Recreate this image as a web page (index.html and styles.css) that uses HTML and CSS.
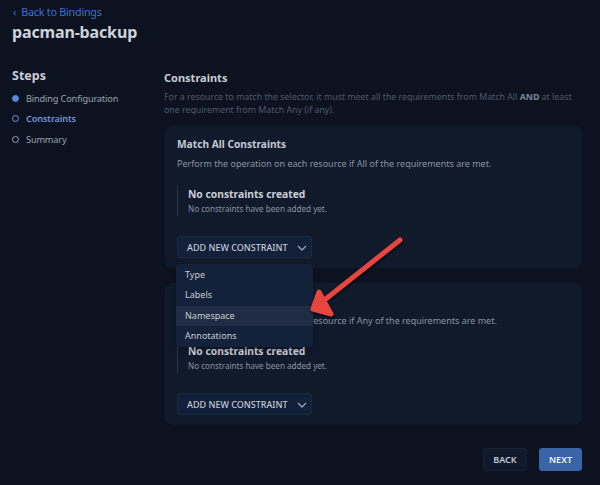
FILE: index.html
```html
<!DOCTYPE html>
<html>
<head>
<meta charset="utf-8">
<link rel="stylesheet" href="styles.css">
</head>
<body>
<div class="page">
  <a class="back">‹&nbsp; Back to Bindings</a>
  <h1 class="title">pacman-backup</h1>
  <div class="layout">
    <aside class="sidebar">
      <h2 class="steps-title">Steps</h2>
      <ul class="steps">
        <li class="step done"><span class="dot"></span>Binding Configuration</li>
        <li class="step active"><span class="dot"></span>Constraints</li>
        <li class="step"><span class="dot"></span>Summary</li>
      </ul>
    </aside>
    <main class="content">
      <h3 class="section-title">Constraints</h3>
      <p class="section-desc">For a resource to match the selector, it must meet all the requirements from Match All <b>AND</b> at least one requirement from Match Any (if any).</p>

      <section class="card">
        <h4 class="card-title">Match All Constraints</h4>
        <p class="card-desc">Perform the operation on each resource if All of the requirements are met.</p>
        <div class="empty">
          <div class="empty-title">No constraints created</div>
          <div class="empty-text">No constraints have been added yet.</div>
        </div>
        <div class="dd">
          <button class="add-btn"><span>ADD NEW CONSTRAINT</span>
            <svg class="chev" width="10" height="6" viewBox="0 0 10 6"><path d="M1 1l4 4 4-4" fill="none" stroke="#9aa3b1" stroke-width="1.3"/></svg>
          </button>
          <ul class="menu">
            <li>Type</li>
            <li>Labels</li>
            <li class="hl">Namespace</li>
            <li>Annotations</li>
          </ul>
        </div>
      </section>

      <section class="card">
        <h4 class="card-title">Match Any Constraints</h4>
        <p class="card-desc">Perform the operation on each resource if Any of the requirements are met.</p>
        <div class="empty">
          <div class="empty-title">No constraints created</div>
          <div class="empty-text">No constraints have been added yet.</div>
        </div>
        <div class="dd">
          <button class="add-btn"><span>ADD NEW CONSTRAINT</span>
            <svg class="chev" width="10" height="6" viewBox="0 0 10 6"><path d="M1 1l4 4 4-4" fill="none" stroke="#9aa3b1" stroke-width="1.3"/></svg>
          </button>
        </div>
      </section>

      <div class="footer">
        <button class="btn btn-back">BACK</button>
        <button class="btn btn-next">NEXT</button>
      </div>
    </main>
  </div>
  <svg class="arrow" width="600" height="485" viewBox="0 0 600 485">
    <g stroke="#000" stroke-opacity="0.35" stroke-width="6" stroke-linecap="round" stroke-linejoin="round" fill="#000" fill-opacity="0.35" transform="translate(1,2)">
      <line x1="400" y1="240" x2="322" y2="302"/>
      <polygon points="313,309 319,292 331,314"/>
    </g>
    <g stroke="#e8453f" stroke-width="5" stroke-linecap="round" stroke-linejoin="round" fill="#e8453f">
      <line x1="400" y1="240" x2="322" y2="302"/>
      <polygon points="313,309 319,292 331,314"/>
    </g>
  </svg>
</div>
</body>
</html>
```

FILE: styles.css
```css
* { box-sizing: border-box; }
html, body {
  margin: 0;
  padding: 0;
  background: #0d1220;
  font-family: "Noto Sans", "Open Sans", sans-serif;
  color: #c6ccd5;
}
.page {
  position: relative;
  width: 600px;
  height: 485px;
  padding: 4px 18px 0 12px;
  overflow: hidden;
}
.back {
  display: block;
  font-size: 10.8px;
  line-height: 16px;
  letter-spacing: -0.25px;
  color: #3c6fd6;
  padding-left: 1px;
}
.title {
  margin: 1px 0 0;
  font-size: 16px;
  line-height: 22px;
  letter-spacing: -0.15px;
  font-weight: 700;
  color: #cfd3da;
}
.layout {
  display: flex;
  margin-top: 24px;
}
.sidebar {
  width: 152px;
  flex: none;
}
.steps-title {
  margin: 0;
  font-size: 12.5px;
  line-height: 18px;
  font-weight: 700;
  color: #c9ced6;
}
.steps {
  list-style: none;
  margin: 3px 0 0;
  padding: 0;
}
.step {
  display: flex;
  align-items: center;
  height: 20.5px;
  font-size: 9.2px;
  letter-spacing: -0.15px;
  color: #9aa2ae;
}
.dot {
  width: 7px;
  height: 7px;
  border-radius: 50%;
  border: 1.3px solid #9aa2ae;
  margin: 0 7px 0 0;
  flex: none;
}
.step.done .dot { background: #5b88d8; border-color: #5b88d8; }
.step.active { color: #6e95dc; font-weight: 600; }
.step.active .dot { border-color: #6e95dc; }
.content {
  flex: 1;
  padding-top: 3px;
}
.section-title {
  margin: 0;
  font-size: 11px;
  line-height: 16px;
  font-weight: 700;
  color: #c9ced6;
}
.section-desc {
  margin: 5px 0 0;
  font-size: 8.8px;
  line-height: 13px;
  color: #4e596b;
}
.section-desc b { color: #7b8596; font-weight: 700; }
.card {
  margin-top: 9px;
  margin-left: 1px;
  background: #111a2b;
  border-radius: 8px;
  padding: 10px 12px 10px;
  height: 142px;
}
.card + .card { margin-top: 15px; }
.card-title {
  margin: 0;
  font-size: 10.2px;
  line-height: 16px;
  font-weight: 700;
  color: #c3c9d2;
}
.card-desc {
  margin: 5px 0 0;
  font-size: 9px;
  line-height: 14px;
  color: #8a93a1;
}
.empty {
  margin-top: 15px;
  border-left: 1px solid #2b3548;
  padding-left: 10px;
  height: 30px;
}
.empty-title {
  font-size: 10.3px;
  line-height: 16px;
  font-weight: 700;
  color: #c9ced6;
}
.empty-text {
  font-size: 8.1px;
  line-height: 14px;
  color: #8a93a1;
}
.dd {
  position: relative;
  margin-top: 20px;
  width: 135px;
}
.add-btn {
  display: flex;
  align-items: center;
  gap: 9px;
  width: 135px;
  height: 22px;
  padding: 0 9px;
  background: #13203a;
  border: 1px solid #1b2944;
  border-radius: 3px;
  font-family: inherit;
  font-size: 9px;
  font-weight: 500;
  white-space: nowrap;
  color: #c3c9d3;
}
.chev { margin-top: 1px; flex: none; }
.menu {
  position: absolute;
  left: -1px;
  top: 28px;
  width: 137px;
  margin: 0;
  padding: 1px 0;
  list-style: none;
  background: #14213a;
  border-radius: 4px;
  z-index: 2;
  box-shadow: 0 2px 6px rgba(0,0,0,0.3);
}
.menu li {
  height: 20.3px;
  line-height: 20px;
  padding-left: 9px;
  font-size: 9px;
  color: #c6ccd5;
}
.menu li.hl { background: #1f2c43; }
.footer {
  display: flex;
  justify-content: flex-end;
  gap: 12px;
  margin-top: 23px;
}
.btn {
  height: 23px;
  border-radius: 3px;
  font-family: inherit;
  font-size: 9px;
  font-weight: 600;
  padding: 0;
}
.btn-back {
  width: 44px;
  background: #0f1a2c;
  border: 1px solid #172338;
  color: #c1c8d3;
}
.btn-next {
  width: 43px;
  background: #3a64a6;
  border: 1px solid #3a64a6;
  color: #eef2f8;
}
.arrow {
  position: absolute;
  left: 0;
  top: 0;
  pointer-events: none;
  z-index: 5;
}
```
